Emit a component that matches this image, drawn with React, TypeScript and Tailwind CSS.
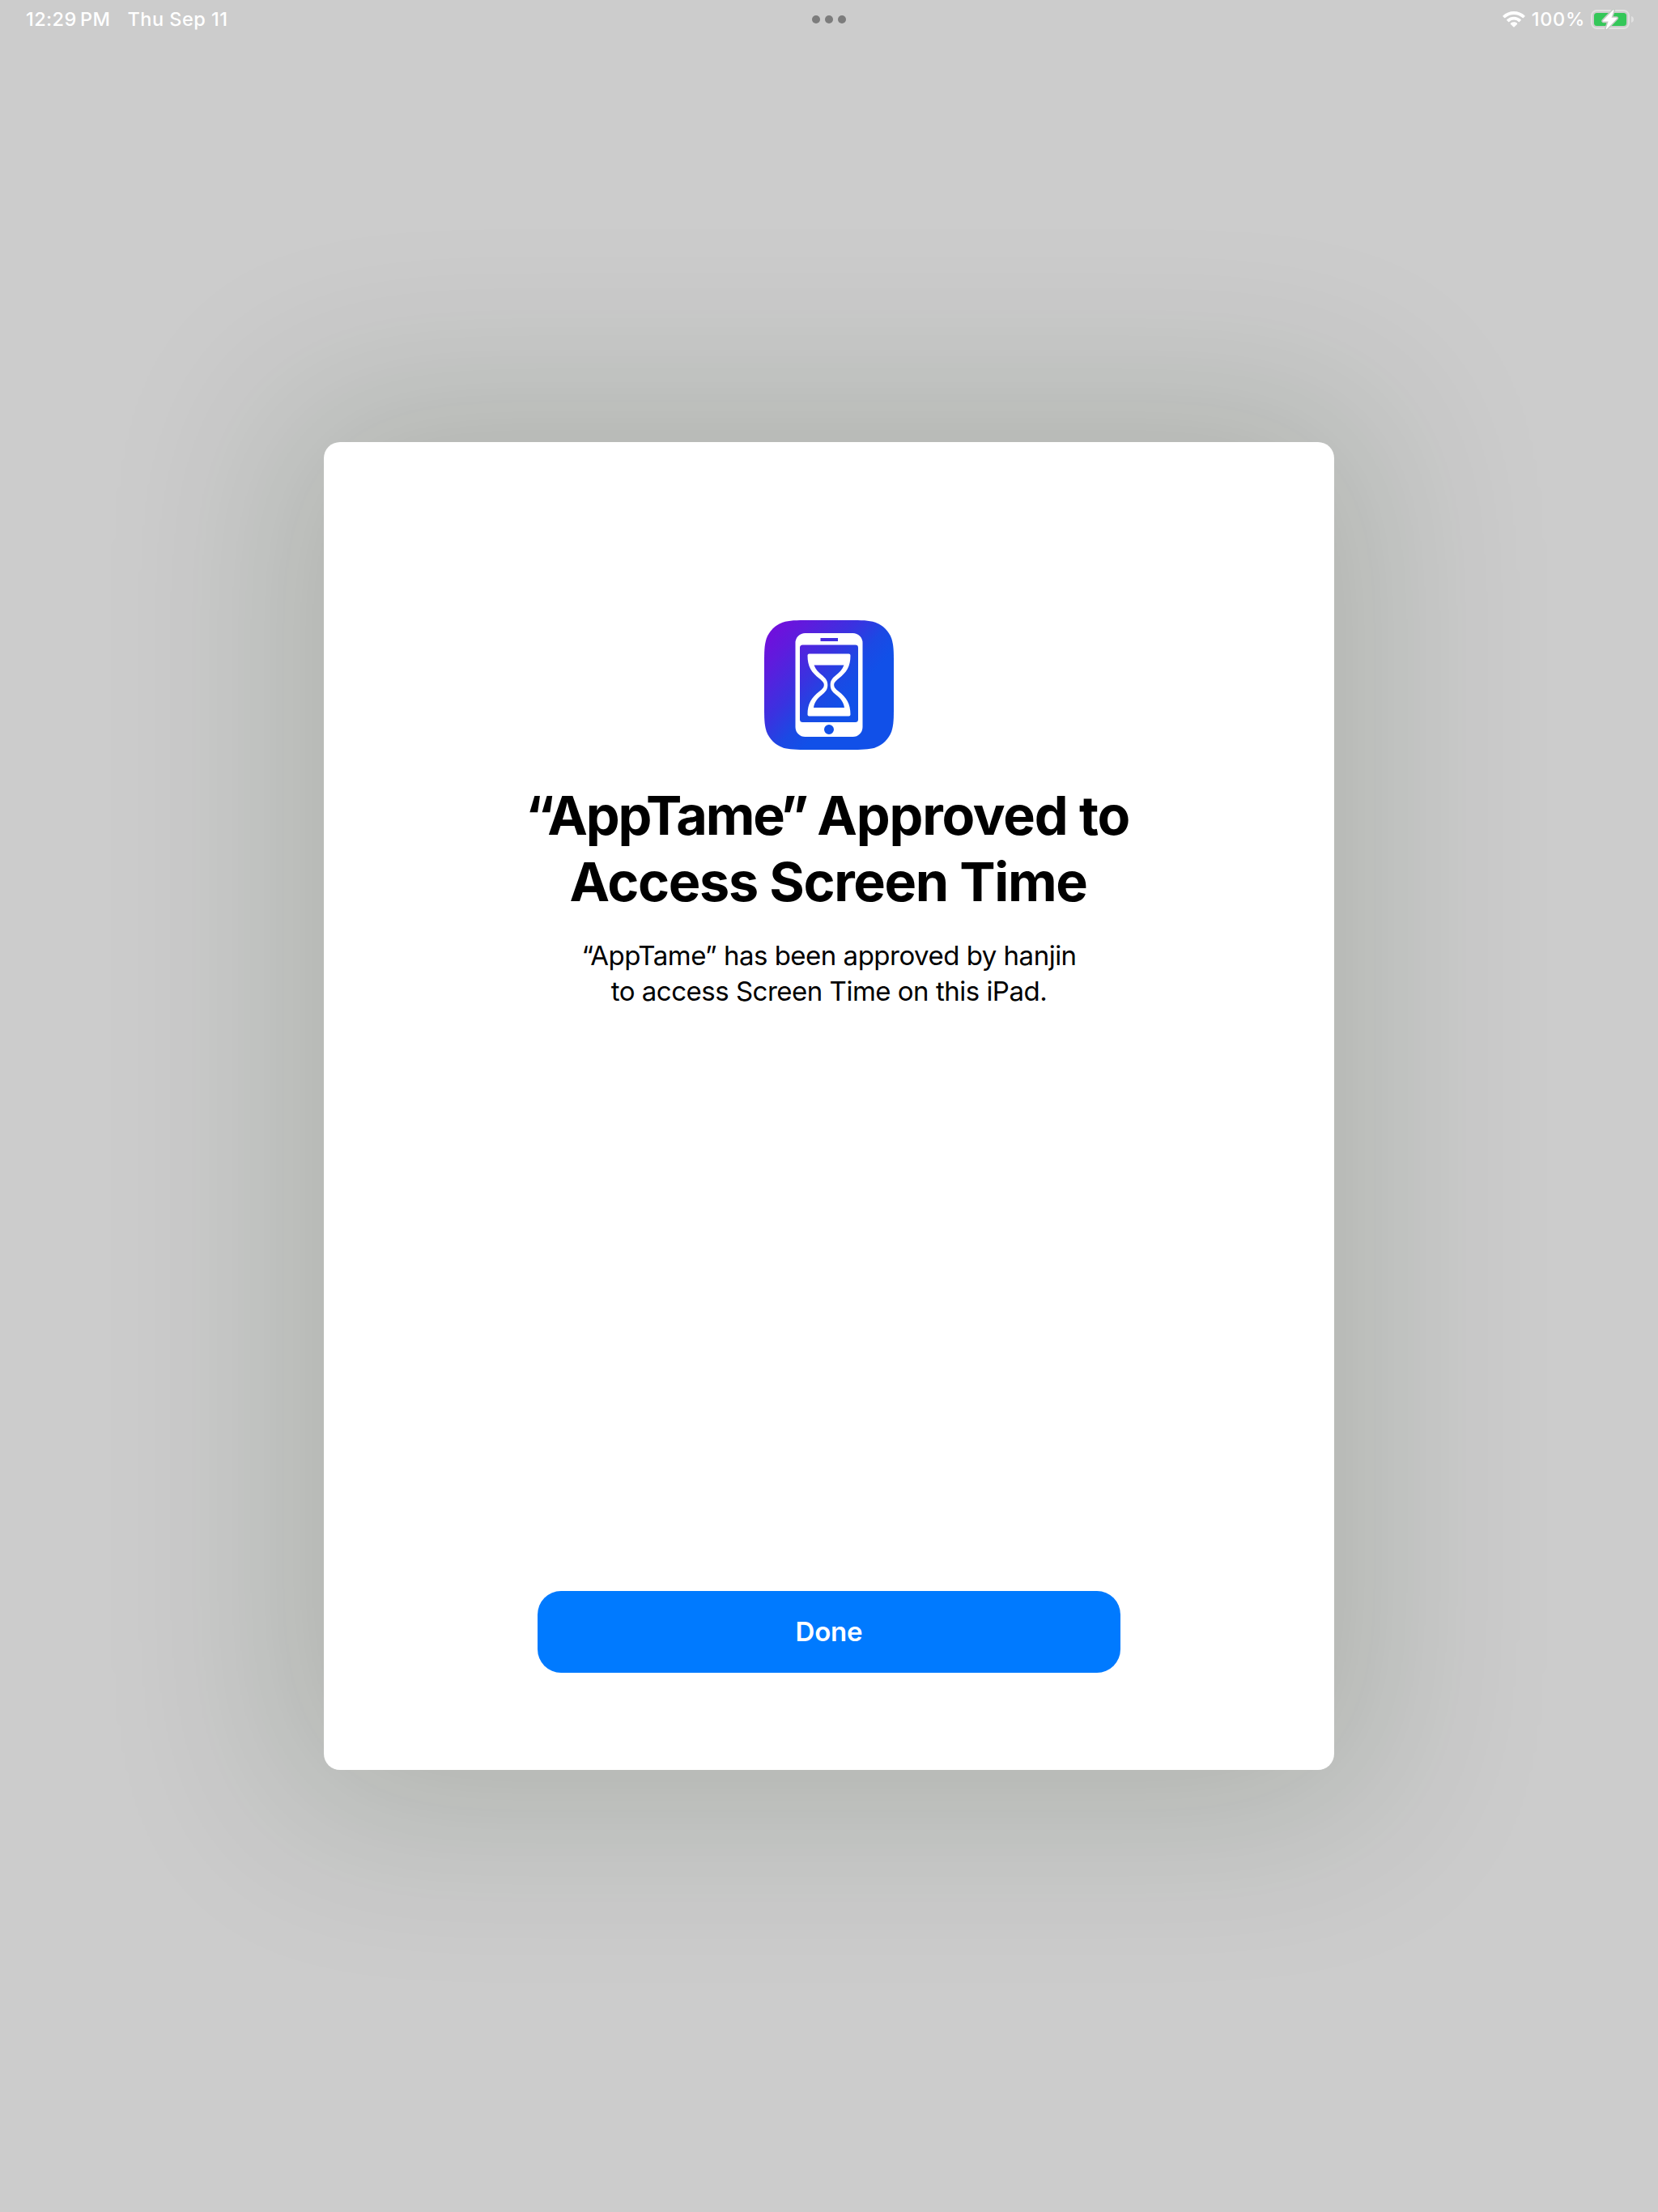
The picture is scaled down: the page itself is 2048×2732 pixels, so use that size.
function StatusBar() {
  return (
    <header className="grid h-12 shrink-0 grid-cols-3 items-center text-[23.5px] leading-[46px] font-[450] text-white">
      <div className="flex items-center gap-[21px] pl-8">
        <span className="tracking-[0.4px]">12:29&#8201;PM</span>
        <span className="tracking-[0.5px]">Thu Sep 11</span>
      </div>
      <div className="flex justify-center gap-1.5">
        <i className="size-2.5 rounded-full bg-[#7c7c7c]" />
        <i className="size-2.5 rounded-full bg-[#7c7c7c]" />
        <i className="size-2.5 rounded-full bg-[#7c7c7c]" />
      </div>
      <div className="flex items-center justify-end pr-[29px]">
        <svg className="mr-2 h-5 w-7" viewBox="0 0 28 20" fill="#fff">
          <path d="M14 0c5.200 0 9.900 2 13.400 5.300.35.35.35.9 0 1.250l-1.500 1.500a.85.85 0 0 1-1.200 0C21.900 5.450 18.100 3.900 14 3.900S6.100 5.450 3.300 8.050a.85.85 0 0 1-1.200 0L.6 6.550a.87.87 0 0 1 0-1.250C4.100 2 8.800 0 14 0z" />
          <path d="M14 6.700c3.300 0 6.300 1.250 8.600 3.350.38.35.38.92.02 1.280l-1.550 1.530a.87.87 0 0 1-1.200.02A8.700 8.700 0 0 0 14 10.600a8.700 8.700 0 0 0-5.870 2.280.87.87 0 0 1-1.200-.02l-1.550-1.530a.9.9 0 0 1 .02-1.280A12.700 12.700 0 0 1 14 6.700z" />
          <path d="M14 13.200c1.500 0 2.850.5 3.900 1.400.4.35.4.95.05 1.300l-3.350 3.350a.85.85 0 0 1-1.200 0l-3.350-3.350a.87.87 0 0 1 .05-1.300A6 6 0 0 1 14 13.200z" />
        </svg>
        <span className="tracking-[0.7px]">100%</span>
        <svg className="ml-[7px] h-[26px] w-[54px]" viewBox="0 0 54 26">
          <rect x="1" y="2" width="46" height="22" rx="6.500" fill="none" stroke="#e1e1e1" strokeWidth="2" />
          <rect x="4" y="5" width="40" height="16" rx="3.500" fill="#34c759" />
          <path d="M50 9c2 .6 3 2.200 3 4s-1 3.400-3 4z" fill="#e1e1e1" />
          <path d="M27.300 1.500 15 14.400c-.5.600-.2 1.200.5 1.200h6.200l-2.900 8.400c-.3.900.5 1.300 1.100.7L32.200 12c.5-.600.200-1.200-.5-1.200h-6.200l3-8.600c.3-.9-.6-1.300-1.200-.7z" fill="#fff" stroke="#c4cac5" strokeWidth="3.200" paintOrder="stroke" />
        </svg>
      </div>
    </header>
  );
}

function AppIcon() {
  return (
    <svg className="size-40" viewBox="0 0 160 160">
      <defs>
        <linearGradient id="tile" x1="8" y1="16" x2="102" y2="101" gradientUnits="userSpaceOnUse">
          <stop offset="0" stopColor="#6f10dc" />
          <stop offset="0.2" stopColor="#5f1bdd" />
          <stop offset="0.55" stopColor="#3a32e0" />
          <stop offset="0.8" stopColor="#1b49e4" />
          <stop offset="1" stopColor="#1150e8" />
        </linearGradient>
      </defs>
      <path
        d="M55 0H105C120.800 0 128.700 0 137.300 2.700C146.600 6.100 153.900 13.400 157.300 22.700C160 31.300 160 39.200 160 55V105C160 120.800 160 128.700 157.300 137.300C153.900 146.600 146.600 153.900 137.300 157.300C128.700 160 120.800 160 105 160H55C39.200 160 31.300 160 22.700 157.300C13.400 153.900 6.100 146.600 2.700 137.300C0 128.700 0 120.800 0 105V55C0 39.200 0 31.300 2.700 22.700C6.100 13.400 13.400 6.100 22.700 2.700C31.300 0 39.200 0 55 0Z"
        fill="url(#tile)"
      />
      <path
        fillRule="evenodd"
        fill="#fff"
        d="M50.500 16h59a12 12 0 0 1 12 12v104a12 12 0 0 1-12 12h-59a12 12 0 0 1-12-12V28a12 12 0 0 1 12-12zM47.500 30.500a3.500 3.500 0 0 0-3.500 3.500v88.500a3.500 3.500 0 0 0 3.500 3.500h65a3.500 3.500 0 0 0 3.500-3.500V34a3.500 3.500 0 0 0-3.500-3.500zM69.500 22v4h21.500v-4zM80 129a6 6 0 1 0 0 12 6 6 0 0 0 0-12z"
      />
      <path
        fillRule="evenodd"
        fill="#fff"
        d="M55.500 41.500h49a2 2 0 0 1 2 2c0 14-5 21-14.500 28.500-4.500 3.500-5.800 5.500-5.800 8s1.300 4.500 5.800 8c9.500 7.500 14.500 15 14.500 28.500a2 2 0 0 1-2 2h-49a2 2 0 0 1-2-2C53.500 103 58.500 95.500 68 88c4.500-3.500 5.800-5.500 5.800-8s-1.300-4.500-5.800-8C58.500 64.500 53.500 57.500 53.500 43.500a2 2 0 0 1 2-2zM61.500 55.500c2 5.500 5.500 9 10 12.500 5 4 6.800 7 6.800 12s-1.800 8-6.800 12c-6 4.800-9.500 9-10.500 16h38c-1-7-4.500-11.200-10.500-16-5-4-6.800-7-6.800-12s1.800-8 6.800-12c4.500-3.500 8-7 10-12.500z"
      />
    </svg>
  );
}

export default function App() {
  return (
    <div className="flex h-[2732px] w-[2048px] flex-col overflow-hidden bg-[#cccccc] font-['Inter',sans-serif]">
      <StatusBar />
      <main className="mx-auto mt-[498px] flex h-[1640px] w-[1248px] flex-col items-center rounded-[20px] bg-white pt-[220px] text-black shadow-[0_0_230px_48px_rgba(12,40,8,0.152)]">
        <AppIcon />
        <h1 className="mt-10 flex flex-col items-center text-[66.5px] leading-[82px] font-bold whitespace-nowrap">
          <span className="-ml-1 tracking-[-1.2px]">
            <span className="tracking-[-2.2px]">“AppTam</span>
            <span className="tracking-[-4.5px]">e”</span> Approved to
          </span>
          <span className="-ml-0.5 tracking-[-1.35px]">Access Screen Time</span>
        </h1>
        <p className="mt-7 flex flex-col items-center text-[33px] leading-[44px] whitespace-nowrap">
          <span className="tracking-[-0.5px]">“AppTame” has been approved by hanjin</span>
          <span className="tracking-[-0.5px]">to access Screen Time on this iPad.</span>
        </p>
        <button className="mt-auto mb-[120px] h-[101px] w-[720px] rounded-[29px] bg-[#007aff] text-[33px] font-semibold tracking-[-0.2px] text-white">
          Done
        </button>
      </main>
    </div>
  );
}
